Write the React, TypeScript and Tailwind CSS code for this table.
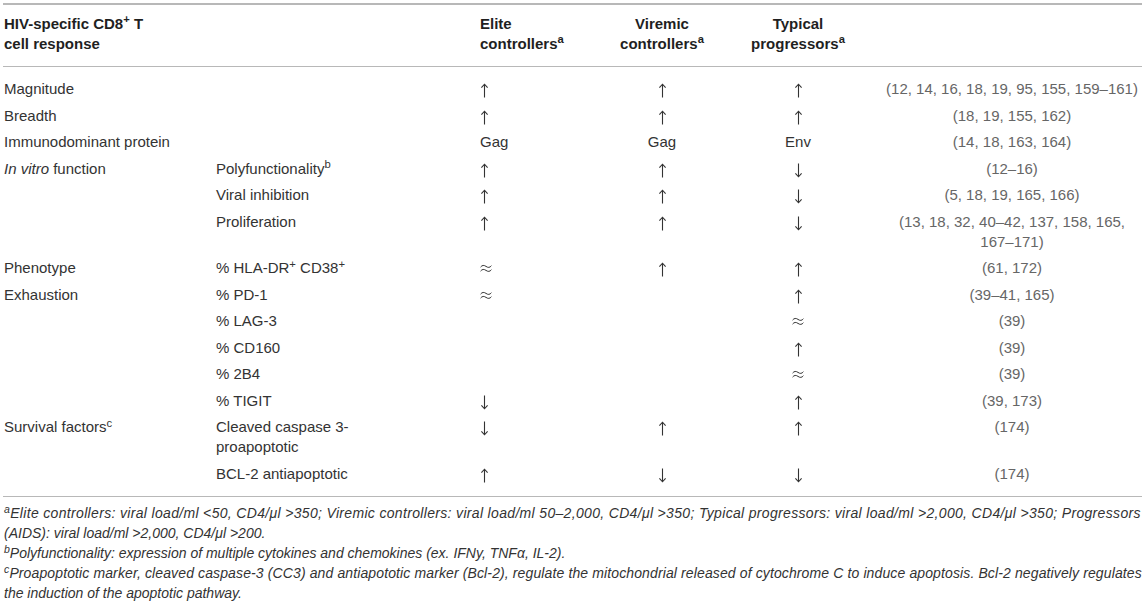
import * as React from "react";

type Mark = "up" | "down" | "approx";
type Cell = Mark | string | undefined;

type Row = {
  group?: React.ReactNode;
  measure?: React.ReactNode;
  elite?: Cell;
  viremic?: Cell;
  typical?: Cell;
  refs: string;
};

const rows: Row[] = [
  { group: "Magnitude", elite: "up", viremic: "up", typical: "up", refs: "(12, 14, 16, 18, 19, 95, 155, 159–161)" },
  { group: "Breadth", elite: "up", viremic: "up", typical: "up", refs: "(18, 19, 155, 162)" },
  { group: "Immunodominant protein", elite: "Gag", viremic: "Gag", typical: "Env", refs: "(14, 18, 163, 164)" },
  {
    group: (
      <>
        <i>In vitro</i> function
      </>
    ),
    measure: (
      <>
        Polyfunctionality<sup>b</sup>
      </>
    ),
    elite: "up",
    viremic: "up",
    typical: "down",
    refs: "(12–16)",
  },
  { measure: "Viral inhibition", elite: "up", viremic: "up", typical: "down", refs: "(5, 18, 19, 165, 166)" },
  { measure: "Proliferation", elite: "up", viremic: "up", typical: "down", refs: "(13, 18, 32, 40–42, 137, 158, 165, 167–171)" },
  {
    group: "Phenotype",
    measure: (
      <>
        % HLA-DR<sup>+</sup> CD38<sup>+</sup>
      </>
    ),
    elite: "approx",
    viremic: "up",
    typical: "up",
    refs: "(61, 172)",
  },
  { group: "Exhaustion", measure: "% PD-1", elite: "approx", typical: "up", refs: "(39–41, 165)" },
  { measure: "% LAG-3", typical: "approx", refs: "(39)" },
  { measure: "% CD160", typical: "up", refs: "(39)" },
  { measure: "% 2B4", typical: "approx", refs: "(39)" },
  { measure: "% TIGIT", elite: "down", typical: "up", refs: "(39, 173)" },
  {
    group: (
      <>
        Survival factors<sup>c</sup>
      </>
    ),
    measure: "Cleaved caspase 3-proapoptotic",
    elite: "down",
    viremic: "up",
    typical: "up",
    refs: "(174)",
  },
  { measure: "BCL-2 antiapoptotic", elite: "up", viremic: "down", typical: "down", refs: "(174)" },
];

const grid = "grid grid-cols-[212px_264px_112px_140px_132px_278px]";

// thin arrows / approx sign drawn to match the light glyphs of the source
function Symbol({ kind, center }: { kind: Mark; center?: boolean }) {
  const place = center ? "mx-auto" : "";
  if (kind === "approx") {
    return (
      <svg aria-label="≈" width="12" height="8" viewBox="0 0 12 8" className={`mt-[6px] block ${place}`}>
        <path
          d="M0.6 3.1C2.2 1 4 1 6 2.4S9.8 3.8 11.4 1.7M0.6 7.1C2.2 5 4 5 6 6.4S9.8 7.8 11.4 5.7"
          fill="none"
          stroke="#333"
          strokeWidth="1"
        />
      </svg>
    );
  }
  const d = kind === "up" ? "M4.5 1.2V14.5M1.4 4.6L4.5 1.2L7.6 4.6" : "M4.5 0.5V13.8M1.4 10.4L4.5 13.8L7.6 10.4";
  return (
    <svg aria-label={kind === "up" ? "↑" : "↓"} width="9" height="15" viewBox="0 0 9 15" className={`mt-[4px] block ${place}`}>
      <path d={d} fill="none" stroke="#333" strokeWidth="1.1" />
    </svg>
  );
}

function Value({ v, center }: { v: Cell; center?: boolean }) {
  if (!v) return null;
  if (v === "up" || v === "down" || v === "approx") return <Symbol kind={v} center={center} />;
  return <>{v}</>;
}

export default function App() {
  return (
    <div className="h-[605px] w-[1145px] overflow-hidden bg-white pt-[3px] font-['Liberation_Sans',Arial,sans-serif] text-[15px] leading-[20px] text-[#333]">
      <div className="ml-[3px] w-[1139px] border-t-2 border-[#b8b8b8]">
        {/* header */}
        <div className={`${grid} border-b border-[#b8b8b8] pb-[12px] pl-[1px] pt-[9px] font-bold text-[#1f1f1f]`}>
          <div>
            HIV-specific CD8<sup>+</sup> T
            <br />
            cell response
          </div>
          <div />
          <div>
            Elite
            <br />
            controllers<sup>a</sup>
          </div>
          <div className="text-center">
            Viremic
            <br />
            controllers<sup>a</sup>
          </div>
          <div className="text-center">
            Typical
            <br />
            progressors<sup>a</sup>
          </div>
          <div />
        </div>

        {/* body */}
        <div className="border-b border-[#b8b8b8] pb-[9px] pl-[1px] pt-[9px]">
          {rows.map((r, i) => (
            <div key={i} className={`${grid} py-[3.25px]`}>
              <div>{r.group}</div>
              <div className="pr-16">{r.measure}</div>
              <div>
                <Value v={r.elite} />
              </div>
              <div className="text-center">
                <Value v={r.viremic} center />
              </div>
              <div className="text-center">
                <Value v={r.typical} center />
              </div>
              <div className="pl-[18px] text-center text-[#666]">{r.refs}</div>
            </div>
          ))}
        </div>

        {/* footnotes */}
        <div className="pl-[1px] pt-[6px] text-[14px] italic leading-[20px] text-[#333]">
          <p className="whitespace-nowrap tracking-[0.33px]">
            <sup>a</sup>Elite controllers: viral load/ml &lt;50, CD4/μl &gt;350; Viremic controllers: viral load/ml
            50–2,000, CD4/μl &gt;350; Typical progressors: viral load/ml &gt;2,000, CD4/μl &gt;350; Progressors
          </p>
          <p>(AIDS): viral load/ml &gt;2,000, CD4/μl &gt;200.</p>
          <p>
            <sup>b</sup>Polyfunctionality: expression of multiple cytokines and chemokines (ex. IFNy, TNFα, IL-2).
          </p>
          <p className="whitespace-nowrap tracking-[0.12px]">
            <sup>c</sup>Proapoptotic marker, cleaved caspase-3 (CC3) and antiapototic marker (Bcl-2), regulate the
            mitochondrial released of cytochrome C to induce apoptosis. Bcl-2 negatively regulates
          </p>
          <p>the induction of the apoptotic pathway.</p>
        </div>
      </div>
    </div>
  );
}
